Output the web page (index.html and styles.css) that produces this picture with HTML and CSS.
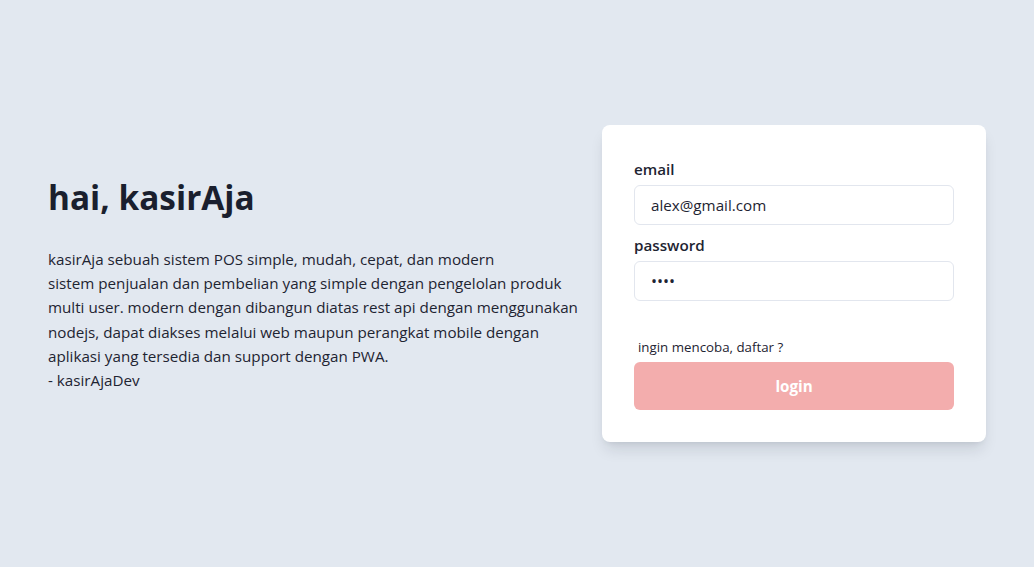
FILE: index.html
```html
<!DOCTYPE html>
<html lang="id">
<head>
<meta charset="utf-8">
<title>kasirAja - login</title>
<link rel="stylesheet" href="styles.css">
</head>
<body>
<main class="page">
  <section class="intro">
    <h1 class="intro-title">hai, kasirAja</h1>
    <p class="intro-text">kasirAja sebuah sistem POS simple, mudah, cepat, dan modern<br>sistem penjualan dan pembelian yang simple dengan pengelolan produk<br>multi user. modern dengan dibangun diatas rest api dengan menggunakan<br>nodejs, dapat diakses melalui web maupun perangkat mobile dengan<br>aplikasi yang tersedia dan support dengan PWA.<br>- kasirAjaDev</p>
  </section>
  <form class="card" onsubmit="return false">
    <label class="field-label" for="email">email</label>
    <input class="field-input" id="email" type="email" value="alex@gmail.com">
    <label class="field-label" for="password">password</label>
    <input class="field-input field-password" id="password" type="password" value="1234">
    <p class="signup">ingin mencoba, daftar ?</p>
    <button class="login-btn" type="submit">login</button>
  </form>
</main>
</body>
</html>
```
FILE: styles.css
```css
* { box-sizing: border-box; }
html, body { margin: 0; }
body {
  background: #e2e8f0;
  font-family: "Open Sans", "Noto Sans", sans-serif;
  color: #1e2432;
}
.page {
  min-height: 567px;
  display: flex;
  align-items: center;
  padding: 0 48px;
}
.intro {
  flex: 1;
  padding-bottom: 2px;
}
.intro-title {
  margin: 0 0 26px;
  font-size: 33.4px;
  line-height: 48px;
  font-weight: 700;
  color: #1a1f2e;
}
.intro-text {
  margin: 0;
  font-size: 15.2px;
  line-height: 24.3px;
  white-space: nowrap;
}
.card {
  width: 384px;
  flex: none;
  background: #fff;
  border-radius: 8px;
  padding: 32px;
  display: flex;
  flex-direction: column;
  box-shadow: 0 10px 15px -3px rgba(15, 23, 42, 0.12), 0 4px 6px -4px rgba(15, 23, 42, 0.1);
}
.field-label {
  font-size: 15.2px;
  line-height: 24px;
  font-weight: 600;
  margin-bottom: 4px;
}
.field-input {
  height: 40px;
  width: 100%;
  border: 1px solid #e2e6ee;
  border-radius: 6px;
  padding: 0 16px;
  font-family: inherit;
  font-size: 15.2px;
  color: #1e2432;
  background: #fff;
  margin-bottom: 8px;
  outline: none;
}
.field-password {
  margin-bottom: 0;
  font-size: 16px;
  letter-spacing: 0;
}
.signup {
  margin: 36px 0 5px 4px;
  font-size: 13.3px;
  line-height: 20px;
}
.login-btn {
  height: 48px;
  border: 0;
  border-radius: 6px;
  background: #f3adad;
  color: #fff;
  font-family: inherit;
  font-size: 15.2px;
  font-weight: 700;
  cursor: pointer;
}
```
